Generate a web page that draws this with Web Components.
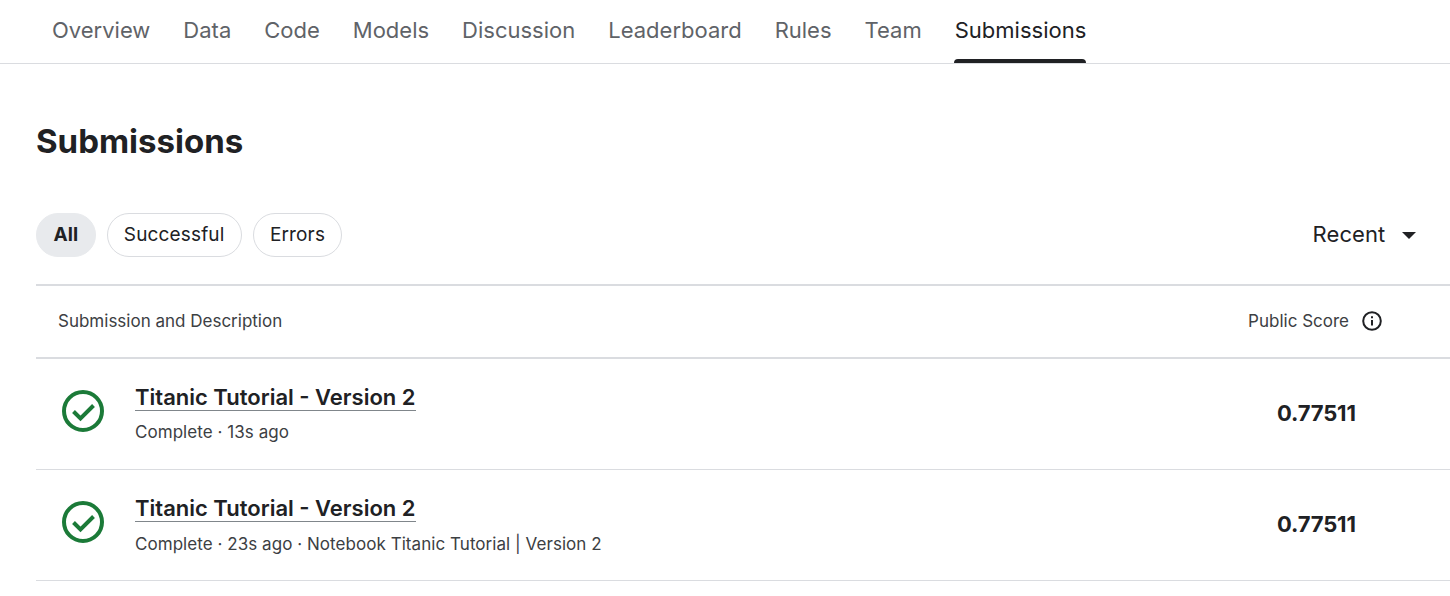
<!DOCTYPE html>
<html>
<head>
<meta charset="utf-8">
<style>
    html, body{ margin: 0; padding: 0; background: #fff; overflow: hidden; }
    body{ font-family: Inter, "Liberation Sans", sans-serif; color: #202124; }
</style>
</head>
<body>
<tab-bar>
    <tab-item>Overview</tab-item>
    <tab-item>Data</tab-item>
    <tab-item>Code</tab-item>
    <tab-item>Models</tab-item>
    <tab-item>Discussion</tab-item>
    <tab-item>Leaderboard</tab-item>
    <tab-item>Rules</tab-item>
    <tab-item>Team</tab-item>
    <tab-item active>Submissions</tab-item>
</tab-bar>
<submissions-page>
    <filter-chip active slot="chips">All</filter-chip>
    <filter-chip slot="chips">Successful</filter-chip>
    <filter-chip slot="chips">Errors</filter-chip>
    <submission-row title="Titanic Tutorial - Version 2" score="0.77511">Complete · 13s ago</submission-row>
    <submission-row linked title="Titanic Tutorial - Version 2" score="0.77511">Complete · 23s ago · Notebook Titanic Tutorial | Version 2</submission-row>
</submissions-page>
<script>
class TabBar extends HTMLElement {
    constructor(){
        super();
        this.attachShadow({mode:'open'});
        this.shadowRoot.innerHTML = `
            <style>
                :host{
                    display: flex;
                    gap: 33px;
                    height: 63px;
                    padding-left: 52px;
                    border-bottom: 1px solid #dadce0;
                }
            </style>
            <slot></slot>
        `;
    }
}

class TabItem extends HTMLElement {
    constructor(){
        super();
        this.attachShadow({mode:'open'});
        this.shadowRoot.innerHTML = `
            <style>
                :host{
                    display: flex;
                    flex-direction: column;
                    box-sizing: border-box;
                    height: 63px;
                    padding-top: 17px;
                    font-size: 22px;
                    line-height: 27px;
                    color: #5f6368;
                }
                :host([active]){
                    color: #202124;
                }
                :host([active])::after{
                    content: '';
                    display: block;
                    height: 4px;
                    margin: auto 0 0 -1px;
                    background: #202124;
                    border-radius: 4px 4px 0 0;
                }
            </style>
            <slot></slot>
        `;
    }
}

class FilterChip extends HTMLElement {
    constructor(){
        super();
        this.attachShadow({mode:'open'});
        this.shadowRoot.innerHTML = `
            <style>
                :host{
                    display: flex;
                    align-items: center;
                    box-sizing: border-box;
                    height: 44px;
                    padding: 0 16.2px 2px;
                    border: 1px solid #dadce0;
                    border-radius: 22px;
                    font-size: 19px;
                    letter-spacing: .15px;
                    color: #202124;
                }
                :host([active]){
                    padding: 0 16.6px 2px;
                    background: #e8eaed;
                    border-color: #e8eaed;
                    font-weight: 700;
                    letter-spacing: 0;
                }
            </style>
            <slot></slot>
        `;
    }
}

class SubmissionRow extends HTMLElement {
    constructor(){
        super();
        this.attachShadow({mode:'open'});
    }

    connectedCallback(){
        this.shadowRoot.innerHTML = `
            <style>
                :host{
                    display: flex;
                    box-sizing: border-box;
                    height: 111px;
                    border-bottom: 1px solid #dadce0;
                }
                svg{
                    flex: none;
                    width: 42px;
                    height: 42px;
                    margin: 31px 31px 0 26px;
                }
                .text{ flex: 1; padding-top: 25px; }
                .title{
                    display: block;
                    width: fit-content;
                    font-size: 22px;
                    font-weight: 600;
                    line-height: 26px;
                    color: #202124;
                    border-bottom: 1px solid #80868b;
                }
                .meta{
                    margin-top: 10px;
                    font-size: 17px;
                    letter-spacing: .05px;
                    line-height: 22px;
                    color: #3c4043;
                }
                :host([linked]) .meta{
                    margin-top: 11px;
                }
                .score{
                    flex: none;
                    width: 173px;
                    margin-top: 40px;
                    font-size: 22px;
                    font-weight: 700;
                    letter-spacing: -.15px;
                    line-height: 28px;
                    color: #202124;
                }
            </style>
            <svg viewBox="0 0 42 42" fill="none" stroke="#1b7a38">
                <circle cx="21" cy="21" r="19" stroke-width="4"/>
                <path d="M11.5 21.5l7 7 13-13" stroke-width="4"/>
            </svg>
            <div class="text">
                <span class="title">${this.getAttribute('title')}</span>
                <div class="meta"><slot></slot></div>
            </div>
            <div class="score">${this.getAttribute('score')}</div>
        `;
    }
}

class SubmissionsPage extends HTMLElement {
    constructor(){
        super();
        this.attachShadow({mode:'open'});
        this.shadowRoot.innerHTML = `
            <style>
                :host{
                    display: block;
                    padding: 0 0 0 36px;
                }
                h1{
                    margin: 0;
                    padding-top: 57px;
                    font-size: 33px;
                    font-weight: 700;
                    line-height: 40px;
                    color: #202124;
                }
                .filters{
                    display: flex;
                    justify-content: space-between;
                    align-items: center;
                    margin-top: 52px;
                    height: 44px;
                }
                .chips{ display: flex; gap: 11px; }
                .sort{
                    display: flex;
                    align-items: center;
                    gap: 16.6px;
                    padding: 0 34px 2px 0;
                    font-size: 22px;
                    letter-spacing: .1px;
                    line-height: 28px;
                    color: #202124;
                }
                .caret{
                    width: 0;
                    height: 0;
                    margin-top: 2px;
                    border-left: 7px solid transparent;
                    border-right: 7px solid transparent;
                    border-top: 7px solid #202124;
                }
                .head{
                    display: flex;
                    justify-content: space-between;
                    align-items: center;
                    box-sizing: border-box;
                    height: 75px;
                    margin-top: 27px;
                    padding: 0 68px 1px 22px;
                    border-top: 2px solid #dadce0;
                    border-bottom: 2px solid #dadce0;
                    font-size: 17px;
                    color: #3c4043;
                }
                .public{ display: flex; align-items: center; gap: 13px; }
                .public svg{ width: 20px; height: 20px; }
            </style>
            <h1>Submissions</h1>
            <div class="filters">
                <div class="chips"><slot name="chips"></slot></div>
                <div class="sort"><span>Recent</span><span class="caret"></span></div>
            </div>
            <div class="head">
                <span>Submission and Description</span>
                <span class="public">Public Score
                    <svg viewBox="0 0 20 20" fill="none" stroke="#202124">
                        <circle cx="10" cy="10" r="8.8" stroke-width="2"/>
                        <path d="M10 9v5.5" stroke-width="2"/>
                        <path d="M10 5.2v2" stroke-width="2"/>
                    </svg>
                </span>
            </div>
            <slot></slot>
        `;
    }
}

customElements.define('tab-bar', TabBar);
customElements.define('tab-item', TabItem);
customElements.define('filter-chip', FilterChip);
customElements.define('submission-row', SubmissionRow);
customElements.define('submissions-page', SubmissionsPage);
</script>
</body>
</html>
